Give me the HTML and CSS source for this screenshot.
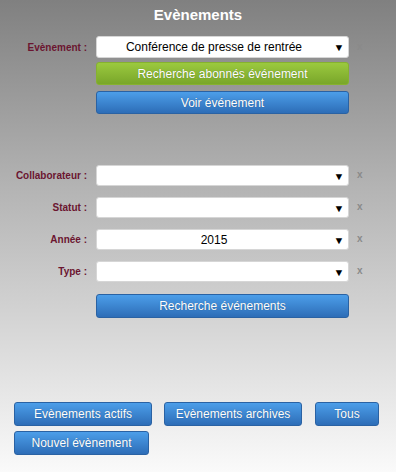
FILE: index.html
```html
<!DOCTYPE html>
<html lang="fr">
<head>
    <meta charset="UTF-8">
    <meta name="viewport" content="width=device-width, initial-scale=1.0">
    <title>Evènements</title>
    <link rel="stylesheet" href="styles.css">
</head>
<body>
    <div class="panel">
        <h1 class="title">Evènements</h1>

        <div class="row row-event">
            <label class="label">Evènement :</label>
            <div class="select">
                <span class="value">Conférence de presse de rentrée</span>
                <span class="arrow">&#9660;</span>
            </div>
            <span class="clear">x</span>
        </div>
        <div class="row row-btn first">
            <span class="label"></span>
            <button class="btn green wide">Recherche abonnés événement</button>
        </div>
        <div class="row row-btn">
            <span class="label"></span>
            <button class="btn blue wide">Voir événement</button>
        </div>

        <div class="filters">
            <div class="row">
                <label class="label">Collaborateur :</label>
                <div class="select"><span class="value"></span><span class="arrow">&#9660;</span></div>
                <span class="clear">x</span>
            </div>
            <div class="row">
                <label class="label">Statut :</label>
                <div class="select"><span class="value"></span><span class="arrow">&#9660;</span></div>
                <span class="clear">x</span>
            </div>
            <div class="row">
                <label class="label">Année :</label>
                <div class="select"><span class="value">2015</span><span class="arrow">&#9660;</span></div>
                <span class="clear">x</span>
            </div>
            <div class="row">
                <label class="label">Type :</label>
                <div class="select"><span class="value"></span><span class="arrow">&#9660;</span></div>
                <span class="clear">x</span>
            </div>
            <div class="row row-search">
                <span class="label"></span>
                <button class="btn blue wide tall">Recherche événements</button>
            </div>
        </div>

        <div class="actions">
            <button class="btn blue tall w138">Evènements actifs</button>
            <button class="btn blue tall w138">Evènements archives</button>
            <button class="btn blue tall w64">Tous</button>
            <button class="btn blue tall w135 new">Nouvel évènement</button>
        </div>
    </div>
</body>
</html>
```

FILE: styles.css
```css
html, body {
    margin: 0;
    padding: 0;
}
body {
    width: 396px;
    height: 472px;
    background: linear-gradient(#808080, #b4b4b4 40%, #fafafa);
    font-family: "Liberation Sans", Arial, sans-serif;
    overflow: hidden;
}
.panel {
    padding-top: 4px;
}
.title {
    margin: 0;
    height: 22px;
    line-height: 22px;
    text-align: center;
    color: #fff;
    font-size: 15px;
    font-weight: bold;
}
.row {
    display: flex;
    align-items: center;
    height: 21px;
}
.row-event {
    margin-top: 10px;
    height: 22px;
}
.label {
    width: 96px;
    flex: none;
    text-align: right;
    padding-right: 9px;
    box-sizing: border-box;
    color: #6b1530;
    font-size: 10px;
    font-weight: bold;
}
.select {
    position: relative;
    width: 253px;
    height: 100%;
    box-sizing: border-box;
    padding-right: 17px;
    background: #fff;
    border: 1px solid #d6d6d6;
    border-radius: 3px;
    display: flex;
    align-items: center;
    justify-content: center;
    font-size: 12px;
    color: #000;
}
.arrow {
    position: absolute;
    right: 4px;
    top: 50%;
    transform: translateY(-50%) scaleX(1.1);
    font-size: 10px;
}
.clear {
    margin-left: 8px;
    color: #8a8a8a;
    font-size: 10px;
    font-weight: bold;
    margin-top: -2px;
}
.row-btn {
    height: 23px;
    margin-top: 6px;
}
.row-btn.first {
    margin-top: 4px;
}
.btn {
    font-family: "Liberation Sans", Arial, sans-serif;
    font-size: 12px;
    color: #fff;
    text-shadow: 0 0 1px rgba(0, 0, 0, 0.35);
    border-radius: 3px;
    padding: 0;
    height: 23px;
    cursor: pointer;
}
.btn.wide {
    width: 253px;
}
.btn.tall {
    height: 24px;
}
.btn.green {
    background: linear-gradient(#9bc93f, #79a62a);
    border: 1px solid #86b22f;
}
.btn.blue {
    background: linear-gradient(#4c9ee9, #2d6db7);
    border: 1px solid #2a62a3;
}
.filters {
    margin-top: 51px;
    display: flex;
    flex-direction: column;
    gap: 11px;
}
.row-search {
    height: 24px;
    margin-top: 1px;
}
.actions {
    margin-top: 84px;
    padding-left: 14px;
    display: flex;
    flex-wrap: wrap;
    column-gap: 12px;
    row-gap: 5px;
    width: 380px;
}
.w138 { width: 138px; }
.w64 { width: 64px; margin-left: 1px; }
.w135 { width: 135px; height: 26px; }
```
